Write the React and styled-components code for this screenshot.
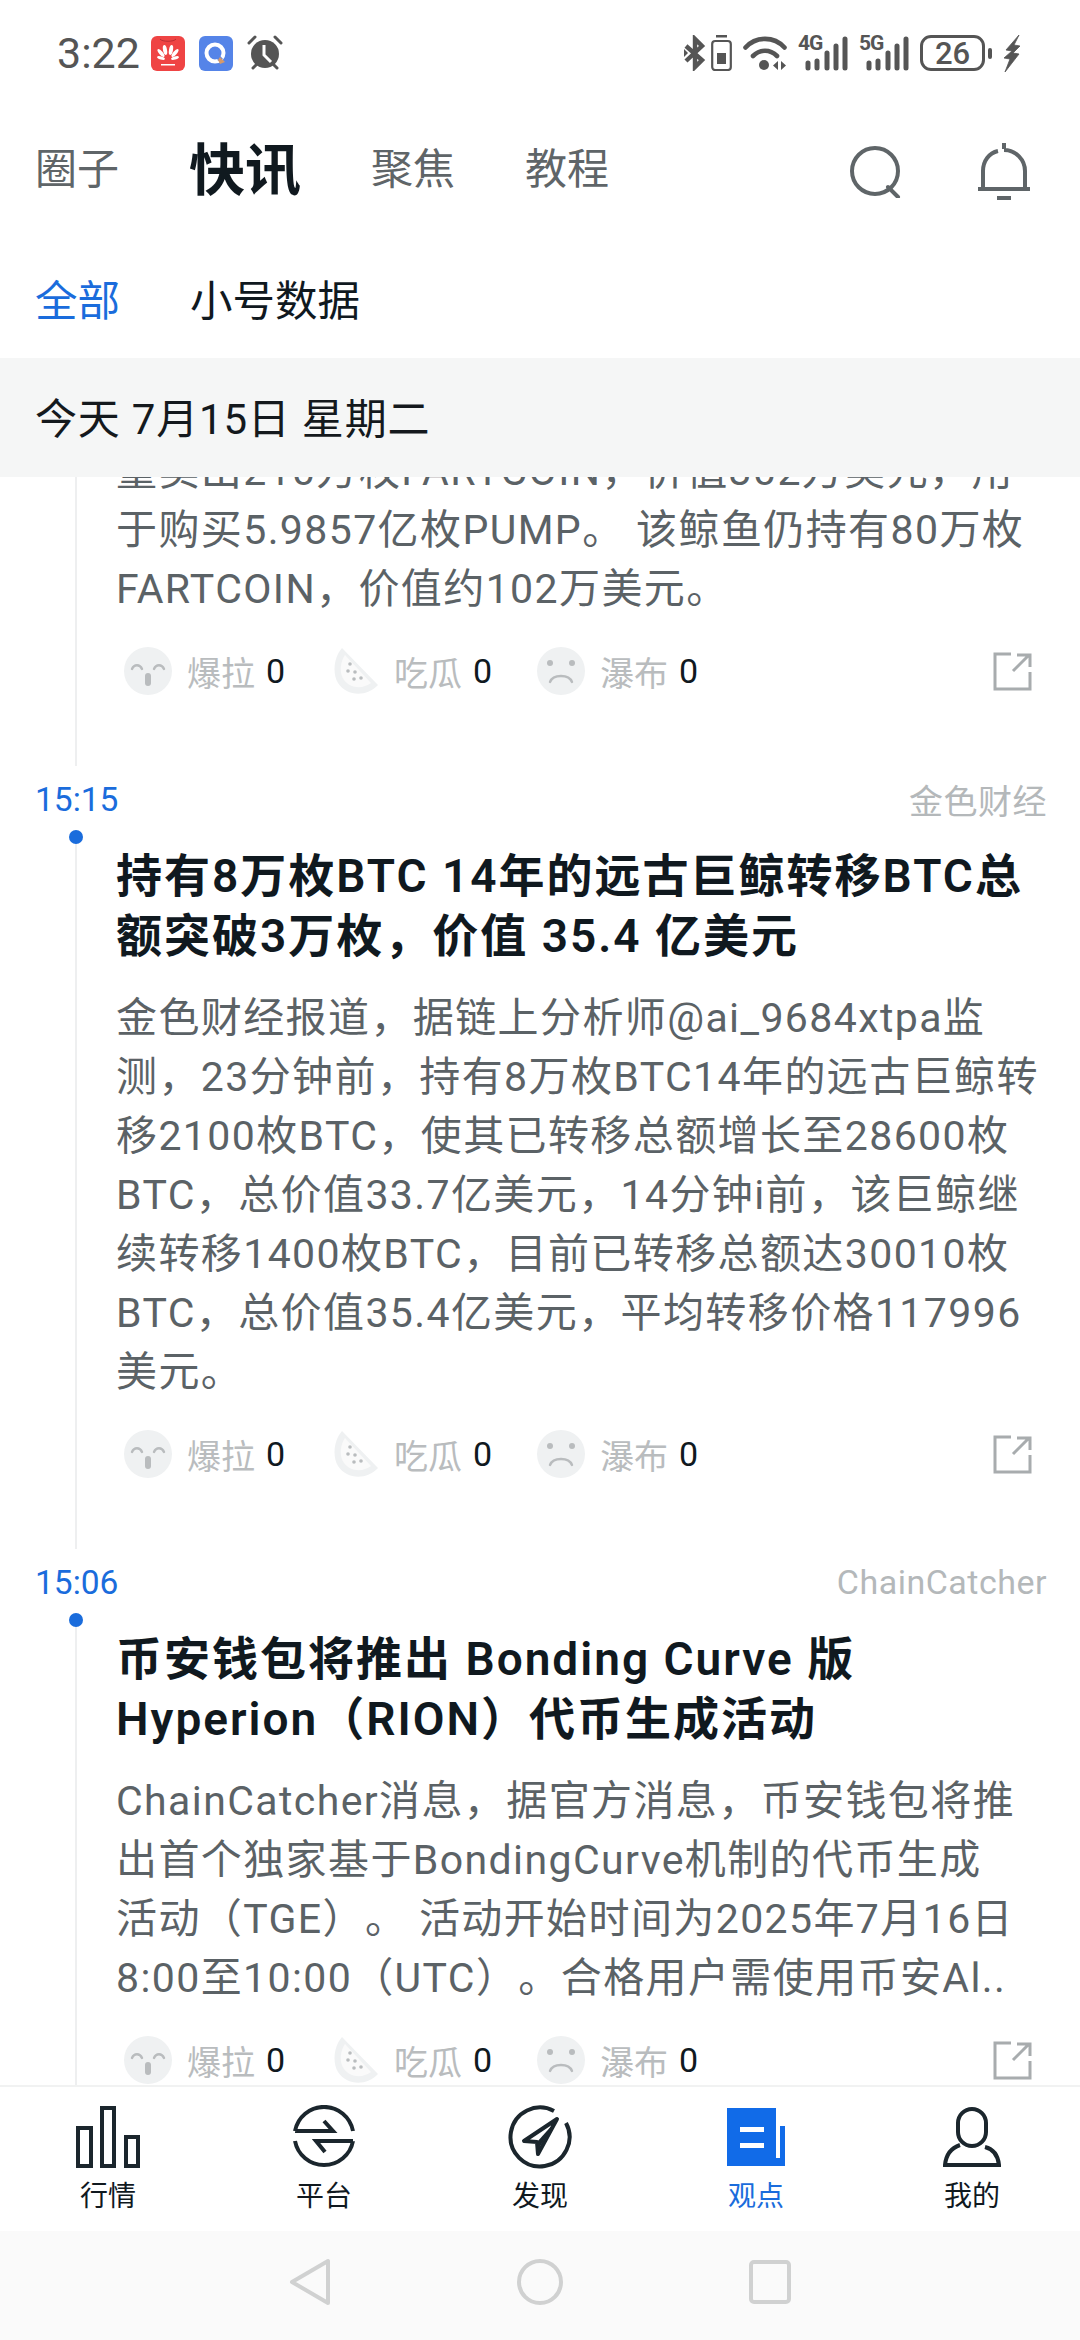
import React from "react";
import styled, { createGlobalStyle } from "styled-components";

const GlobalStyle = createGlobalStyle`
  * { box-sizing: border-box; }
  html, body { margin: 0; padding: 0; background: #fff; }
  body {
    font-family: Roboto, "Noto Sans CJK SC", sans-serif;
    text-spacing-trim: space-all;
  }
`;

const Page = styled.div`
  width: 1080px;
  height: 2340px;
  display: flex;
  flex-direction: column;
  overflow: hidden;
  background: #fff;
`;

const StatusBar = styled.div`
  height: 106px;
  flex: none;
  display: flex;
  align-items: center;
  justify-content: space-between;
  padding: 0 60px 0 57px;
  color: #555;
`;

const StatusGroup = styled.div`
  display: flex;
  align-items: center;
  gap: ${(p) => p.$gap || 12}px;
`;

const Clock = styled.span`
  font-size: 43px;
  color: #555;
  margin-right: -3px;
`;

const SignalWrap = styled.div`
  position: relative;
  width: 50px;
  height: 35px;
`;

const SignalLabel = styled.span`
  position: absolute;
  left: 0;
  top: -3px;
  font-size: 21px;
  font-weight: 700;
  line-height: 21px;
  letter-spacing: -1px;
  color: #555;
`;

const Battery = styled.div`
  width: 65px;
  height: 36px;
  border: 3px solid #555;
  border-radius: 11px;
  display: flex;
  align-items: center;
  justify-content: center;
  font-size: 31px;
  font-weight: 500;
  color: #555;
`;

const BatteryNib = styled.span`
  width: 4px;
  height: 11px;
  border-radius: 2px;
  background: #555;
  margin-left: -8px;
`;

const Header = styled.div`
  height: 118px;
  flex: none;
  display: flex;
  align-items: center;
  padding: 0 50px 0 35px;
`;

const HeaderTab = styled.span`
  font-size: ${(p) => (p.$active ? 56 : 42)}px;
  font-weight: ${(p) => (p.$active ? 700 : 400)};
  color: ${(p) => (p.$active ? "#10191f" : "#5f6568")};
  margin-right: 70px;
`;

const HeaderIcons = styled.div`
  margin-left: auto;
  display: flex;
  align-items: center;
  gap: 76px;
  margin-top: 14px;
`;

const SubTabs = styled.div`
  height: 134px;
  flex: none;
  display: flex;
  align-items: center;
  gap: 70px;
  padding: 12px 35px 0;
`;

const SubTab = styled.span`
  font-size: 42.5px;
  color: ${(p) => (p.$active ? "#1a6cdc" : "#10191f")};
`;

const DateBar = styled.div`
  height: 119px;
  flex: none;
  position: relative;
  z-index: 2;
  display: flex;
  align-items: center;
  padding: 0 35px 4px;
  font-size: 42px;
  letter-spacing: 0.8px;
  color: #14191d;
  background: #f5f6f6;
`;

const Feed = styled.div`
  flex: 1;
  min-height: 0;
  overflow: hidden;
`;

const FeedInner = styled.div`
  margin-top: -39px;
`;

const ItemHead = styled.div`
  height: 66px;
  display: flex;
  align-items: center;
  justify-content: space-between;
  padding: 0 33px 0 35px;
`;

const Time = styled.span`
  font-size: 33.5px;
  color: #1a6cdc;
`;

const Source = styled.span`
  font-size: 34px;
  letter-spacing: 0.5px;
  color: #b4b8ba;
`;

const ItemBody = styled.div`
  position: relative;
  margin-left: 75px;
  padding: 4px 0 69px 39px;
  border-left: 2px solid #eeeff0;
`;

const Dot = styled.span`
  position: absolute;
  left: -8px;
  top: -2px;
  width: 14px;
  height: 14px;
  border-radius: 50%;
  background: #1a6cdc;
`;

const Title = styled.h3`
  margin: 10px 0 23px;
  font-size: 46px;
  line-height: 60px;
  font-weight: 600;
  letter-spacing: 2px;
  color: #10191f;
`;

const Line = styled.span`
  display: block;
  white-space: nowrap;
`;

const Text = styled.p`
  margin: 0;
  font-size: 41px;
  line-height: 59px;
  letter-spacing: 1.4px;
  color: #5b6266;
`;

const Actions = styled.div`
  display: flex;
  align-items: center;
  height: 52px;
  margin-top: 26px;
  padding-left: 8px;
  padding-right: 48px;
`;

const Reaction = styled.div`
  display: flex;
  align-items: center;
  width: ${(p) => p.$w}px;
`;

const ReactionName = styled.span`
  margin-left: 15px;
  font-size: 34px;
  color: #b9bcbe;
`;

const ReactionCount = styled.span`
  margin-left: 11px;
  font-size: 34px;
  color: #10191f;
`;

const Share = styled.div`
  margin-left: auto;
  display: flex;
`;

const TabBar = styled.nav`
  height: 146px;
  flex: none;
  display: grid;
  grid-template-columns: repeat(5, 1fr);
  align-items: start;
  padding-top: 18px;
  background: #fff;
  border-top: 2px solid #f1f2f2;
  position: relative;
  z-index: 2;
`;

const TabItem = styled.div`
  display: flex;
  flex-direction: column;
  align-items: center;
`;

const TabIcon = styled.div`
  height: 64px;
  display: flex;
  align-items: center;
  justify-content: center;
`;

const TabLabel = styled.span`
  margin-top: 8px;
  font-size: 28px;
  line-height: 40px;
  color: ${(p) => (p.$active ? "#1a6cdc" : "#10191f")};
`;

const SystemNav = styled.div`
  height: 109px;
  flex: none;
  display: flex;
  align-items: center;
  justify-content: center;
  gap: 186px;
  padding-bottom: 8px;
  background: #fafafa;
`;

const HuaweiIcon = () => (
  <svg width="34" height="35" viewBox="0 0 34 35">
    <rect width="34" height="35" rx="6" fill="#ef4444" />
    <path d="M9 3c2 3 14 3 16 0" stroke="#b92f34" strokeWidth="1" fill="none" />
    <g fill="#fff">
      <ellipse cx="14" cy="14" rx="2" ry="5" transform="rotate(-10 14 14)" />
      <ellipse cx="20" cy="14" rx="2" ry="5" transform="rotate(10 20 14)" />
      <ellipse cx="10" cy="17" rx="1.8" ry="5" transform="rotate(-40 10 17)" />
      <ellipse cx="24" cy="17" rx="1.8" ry="5" transform="rotate(40 24 17)" />
      <ellipse cx="10" cy="22" rx="1.5" ry="4" transform="rotate(-75 10 22)" />
      <ellipse cx="24" cy="22" rx="1.5" ry="4" transform="rotate(75 24 22)" />
      <rect x="10" y="28" width="14" height="1.5" />
    </g>
  </svg>
);

const BoostIcon = () => (
  <svg width="34" height="35" viewBox="0 0 34 35">
    <rect width="34" height="35" rx="6" fill="#5584e8" />
    <circle cx="16" cy="17" r="8.5" fill="none" stroke="#fff" strokeWidth="4" />
    <path d="M15 13l9 10-5 2z" fill="#5584e8" />
    <path d="M21 21l5 5-5 2-2-4z" fill="#d79a6a" />
  </svg>
);

const AlarmIcon = () => (
  <svg width="36" height="36" viewBox="0 0 36 36">
    <circle cx="18" cy="19" r="14" fill="#555" />
    <path d="M2 8l6-6M34 8l-6-6M6 33l3-3M30 33l-3-3" stroke="#555" strokeWidth="3" strokeLinecap="round" />
    <path d="M17 10v10l7 7" stroke="#fff" strokeWidth="3" fill="none" />
  </svg>
);

const BluetoothIcon = () => (
  <svg width="22" height="36" viewBox="0 0 22 36">
    <path d="M2 11l16 14-7 7V4l7 7L2 26" fill="none" stroke="#555" strokeWidth="4.4" />
    <path d="M0 14v8l4-4z" fill="#555" />
  </svg>
);

const SmallBatteryIcon = () => (
  <svg width="21" height="36" viewBox="0 0 21 36">
    <rect x="5" y="0" width="11" height="2.5" fill="#555" />
    <rect x="1.2" y="6" width="18.6" height="29" rx="3" fill="none" stroke="#555" strokeWidth="2.2" />
    <rect x="6" y="18" width="9" height="11" fill="#555" />
  </svg>
);

const WifiIcon = () => (
  <svg width="44" height="35" viewBox="0 0 44 35">
    <g fill="none" stroke="#555" strokeWidth="4.6" strokeLinecap="round">
      <path d="M2.500 11.500C13 0 31 0 41.500 11.500" />
      <path d="M10 20c7-7 17-7 24 0" />
    </g>
    <circle cx="21" cy="29" r="5" fill="#555" />
    <path d="M35 25v9l-5-4.500zM38 25v9l5-4.500z" fill="#555" />
  </svg>
);

const Signal = ({ label }) => (
  <SignalWrap>
    <SignalLabel>{label}</SignalLabel>
    <svg width="50" height="35" viewBox="0 0 50 35">
      <g stroke="#555" strokeWidth="5" strokeLinecap="round">
        <path d="M10 27v5M19 25v7M29 17v15M38 10v22M47 3v29" />
      </g>
    </svg>
  </SignalWrap>
);

const BoltIcon = () => (
  <svg width="17" height="37" viewBox="0 0 17 37">
    <path d="M16 0L3 15l6 1-8 7 6 1-5 13 14-18-6-1 7-7-6-1z" fill="#555" stroke="#555" strokeWidth="0.8" />
  </svg>
);

const SearchIcon = () => (
  <svg width="52" height="52" viewBox="0 0 52 52">
    <circle cx="25" cy="25" r="23" fill="none" stroke="#5f6568" strokeWidth="4" />
    <path d="M38 41l10 10" stroke="#5f6568" strokeWidth="4" strokeLinecap="round" />
  </svg>
);

const BellIcon = () => (
  <svg width="52" height="58" viewBox="0 0 52 58">
    <path
      d="M26 0v6M20 8C11 10 5 18 5 28v18M26 7c12 0 21 10 21 21v18M0 46h52M19 55h14"
      fill="none"
      stroke="#5f6568"
      strokeWidth="4"
    />
  </svg>
);

const SurpriseFace = () => (
  <svg width="48" height="48" viewBox="0 0 48 48">
    <circle cx="24" cy="24" r="24" fill="#eff1f2" />
    <path d="M8 22c2-5 8-5 10 0M30 22c2-5 8-5 10 0" fill="none" stroke="#b9bcbe" strokeWidth="2.4" strokeLinecap="round" />
    <rect x="21" y="26" width="6" height="13" rx="3" fill="#b9bcbe" />
  </svg>
);

const Melon = () => (
  <svg width="46" height="48" viewBox="0 0 46 48">
    <path d="M9 1L45 38C34 50 14 50 5 36C-1 26 1 10 9 1z" fill="#eff1f2" />
    <path d="M12 8L38 36C30 42 18 42 11 33C6 26 7 15 12 8z" fill="#fafafa" />
    <g fill="#b9bcbe">
      <circle cx="17" cy="17" r="1.8" />
      <circle cx="15" cy="24" r="1.8" />
      <circle cx="22" cy="25" r="1.8" />
      <circle cx="21" cy="32" r="1.8" />
      <circle cx="28" cy="31" r="1.8" />
    </g>
  </svg>
);

const SadFace = () => (
  <svg width="48" height="48" viewBox="0 0 48 48">
    <circle cx="24" cy="24" r="24" fill="#eff1f2" />
    <circle cx="13" cy="16" r="3" fill="#b9bcbe" />
    <circle cx="35" cy="16" r="3" fill="#b9bcbe" />
    <path d="M13 35c3-8 19-8 22 0" fill="none" stroke="#b9bcbe" strokeWidth="2.4" strokeLinecap="round" />
  </svg>
);

const ShareIcon = () => (
  <svg width="39" height="39" viewBox="0 0 39 39">
    <path d="M18 2H2V37H37V20" fill="none" stroke="#a8acae" strokeWidth="3" />
    <path d="M20 19L36 3M24 3H37V15" fill="none" stroke="#a8acae" strokeWidth="3" />
  </svg>
);

const BarsIcon = () => (
  <svg width="64" height="62" viewBox="0 0 64 62">
    <g fill="none" stroke="#1b262d" strokeWidth="4">
      <rect x="2" y="22" width="13" height="38" />
      <rect x="26" y="2" width="12" height="58" />
      <rect x="50" y="31" width="12" height="29" />
    </g>
  </svg>
);

const PlatformIcon = () => (
  <svg width="64" height="64" viewBox="0 0 64 64">
    <g fill="none" stroke="#1b262d" strokeWidth="4">
      <path d="M3 26A29.5 29.5 0 0 1 61 26M3 26H41L32 16" />
      <path d="M61 36A29.5 29.5 0 0 1 3 36M61 36H24L33 47" />
    </g>
  </svg>
);

const CompassIcon = () => (
  <svg width="64" height="64" viewBox="0 0 64 64">
    <g fill="none" stroke="#1b262d" strokeWidth="4">
      <path d="M46 6A29.5 29.5 0 1 0 58 18" />
      <path d="M49 14L16 36L29 37L30 49z" strokeLinejoin="round" />
    </g>
    <path d="M47 17L29 37L30 45z" fill="#1b262d" />
  </svg>
);

const DocIcon = () => (
  <svg width="58" height="58" viewBox="0 0 58 58">
    <rect x="0" y="0" width="49" height="58" fill="#116be8" />
    <rect x="49" y="18" width="9" height="40" fill="#116be8" />
    <rect x="49" y="18" width="4" height="32" fill="#fff" />
    <rect x="13" y="19" width="24" height="5" fill="#fff" />
    <rect x="13" y="35" width="24" height="5" fill="#fff" />
  </svg>
);

const UserIcon = () => (
  <svg width="58" height="60" viewBox="0 0 58 60">
    <g fill="none" stroke="#1b262d" strokeWidth="4">
      <rect x="15" y="2" width="28" height="37" rx="14" />
      <path d="M17 38C8 41 3 48 2 58H56C55 48 50 42 42 40" />
    </g>
  </svg>
);

const BackIcon = () => (
  <svg width="42" height="48" viewBox="0 0 42 48">
    <path d="M39 3V45L3 24z" fill="none" stroke="#d0d1d1" strokeWidth="4" strokeLinejoin="round" />
  </svg>
);

const HomeIcon = () => (
  <svg width="46" height="48" viewBox="0 0 46 48">
    <circle cx="23" cy="24" r="21" fill="none" stroke="#d0d1d1" strokeWidth="4" />
  </svg>
);

const RecentIcon = () => (
  <svg width="42" height="44" viewBox="0 0 42 44">
    <rect x="2" y="2" width="38" height="40" rx="3" fill="none" stroke="#d0d1d1" strokeWidth="4" />
  </svg>
);

const items = [
  {
    id: "a",
    body: [
      "量卖出210万枚FARTCOIN，价值302万美元，用",
      "于购买5.9857亿枚PUMP。 该鲸鱼仍持有80万枚",
      "FARTCOIN，价值约102万美元。",
    ],
  },
  {
    id: "b",
    time: "15:15",
    source: "金色财经",
    title: ["持有8万枚BTC 14年的远古巨鲸转移BTC总", "额突破3万枚，价值 35.4 亿美元"],
    body: [
      "金色财经报道，据链上分析师@ai_9684xtpa监",
      "测，23分钟前，持有8万枚BTC14年的远古巨鲸转",
      "移2100枚BTC，使其已转移总额增长至28600枚",
      "BTC，总价值33.7亿美元，14分钟i前，该巨鲸继",
      "续转移1400枚BTC，目前已转移总额达30010枚",
      "BTC，总价值35.4亿美元，平均转移价格117996",
      "美元。",
    ],
  },
  {
    id: "c",
    time: "15:06",
    source: "ChainCatcher",
    title: ["币安钱包将推出 Bonding Curve 版", "Hyperion（RION）代币生成活动"],
    body: [
      "ChainCatcher消息，据官方消息，币安钱包将推",
      "出首个独家基于BondingCurve机制的代币生成",
      "活动（TGE）。 活动开始时间为2025年7月16日",
      "8:00至10:00（UTC）。合格用户需使用币安Al..",
    ],
  },
];

const tabs = [
  { label: "行情", icon: <BarsIcon /> },
  { label: "平台", icon: <PlatformIcon /> },
  { label: "发现", icon: <CompassIcon /> },
  { label: "观点", icon: <DocIcon />, active: true },
  { label: "我的", icon: <UserIcon /> },
];

const NewsItem = ({ item }) => (
  <div>
    {item.time && (
      <ItemHead>
        <Time>{item.time}</Time>
        <Source>{item.source}</Source>
      </ItemHead>
    )}
    <ItemBody>
      {item.time && <Dot />}
      {item.title && (
        <Title>
          {item.title.map((l) => (
            <Line key={l}>{l}</Line>
          ))}
        </Title>
      )}
      <Text>
        {item.body.map((l) => (
          <Line key={l}>{l}</Line>
        ))}
      </Text>
      <Actions>
        <Reaction $w={209}>
          <SurpriseFace />
          <ReactionName>爆拉</ReactionName>
          <ReactionCount>0</ReactionCount>
        </Reaction>
        <Reaction $w={204}>
          <Melon />
          <ReactionName>吃瓜</ReactionName>
          <ReactionCount>0</ReactionCount>
        </Reaction>
        <Reaction $w={170}>
          <SadFace />
          <ReactionName>瀑布</ReactionName>
          <ReactionCount>0</ReactionCount>
        </Reaction>
        <Share>
          <ShareIcon />
        </Share>
      </Actions>
    </ItemBody>
  </div>
);

export default function App() {
  return (
    <Page>
      <GlobalStyle />
      <StatusBar>
        <StatusGroup $gap={14}>
          <Clock>3:22</Clock>
          <HuaweiIcon />
          <BoostIcon />
          <AlarmIcon />
        </StatusGroup>
        <StatusGroup $gap={11}>
          <StatusGroup $gap={5}>
            <BluetoothIcon />
            <SmallBatteryIcon />
          </StatusGroup>
          <WifiIcon />
          <Signal label="4G" />
          <Signal label="5G" />
          <Battery>26</Battery>
          <BatteryNib />
          <BoltIcon />
        </StatusGroup>
      </StatusBar>
      <Header>
        <HeaderTab>圈子</HeaderTab>
        <HeaderTab $active>快讯</HeaderTab>
        <HeaderTab>聚焦</HeaderTab>
        <HeaderTab>教程</HeaderTab>
        <HeaderIcons>
          <SearchIcon />
          <BellIcon />
        </HeaderIcons>
      </Header>
      <SubTabs>
        <SubTab $active>全部</SubTab>
        <SubTab>小号数据</SubTab>
      </SubTabs>
      <DateBar>今天 7月15日 星期二</DateBar>
      <Feed>
        <FeedInner>
          {items.map((item) => (
            <NewsItem key={item.id} item={item} />
          ))}
        </FeedInner>
      </Feed>
      <TabBar>
        {tabs.map((t) => (
          <TabItem key={t.label}>
            <TabIcon>{t.icon}</TabIcon>
            <TabLabel $active={t.active}>{t.label}</TabLabel>
          </TabItem>
        ))}
      </TabBar>
      <SystemNav>
        <BackIcon />
        <HomeIcon />
        <RecentIcon />
      </SystemNav>
    </Page>
  );
}
